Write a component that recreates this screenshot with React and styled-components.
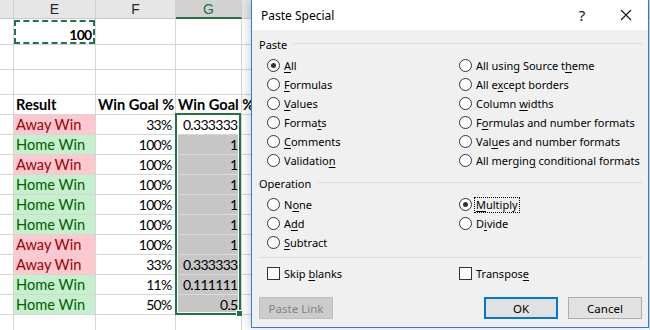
import React from "react";
import styled, { createGlobalStyle, css } from "styled-components";

const GlobalStyle = createGlobalStyle`
  html, body { margin: 0; padding: 0; background: #fff; }
  body { width: 650px; height: 330px; overflow: hidden; }
  * { box-sizing: border-box; }
`;

const GREEN = "#217346";
const GRID = "#d6d6d6";

const Stage = styled.div`
  position: relative;
  width: 650px;
  height: 330px;
  overflow: hidden;
  background: #fff;
`;

const Layers = styled.div`
  display: grid;
  > * {
    grid-area: 1 / 1;
  }
`;

const sheetTemplate = css`
  display: grid;
  grid-template-columns: 14px 82px 80px 66px 1fr;
  grid-template-rows: 19px 26px 25px 25px 20px repeat(11, 20px);
`;

const Sheet = styled.div`
  ${sheetTemplate}
  font-family: Lato, "Liberation Sans", sans-serif;
  font-size: 14.6px;
  color: #000;
`;

const Overlay = styled.div`
  ${sheetTemplate}
  pointer-events: none;
`;

const Cell = styled.div`
  border-right: 1px solid ${GRID};
  border-bottom: 1px solid ${GRID};
  display: flex;
  align-items: flex-end;
  justify-content: ${(p) => (p.$right ? "flex-end" : "flex-start")};
  padding: 0 3px 0 2px;
  white-space: nowrap;
  line-height: 18px;
  font-weight: ${(p) => (p.$bold ? 700 : 400)};
  ${(p) =>
    p.$num &&
    css`
      font-size: 14px;
      letter-spacing: -0.7px;
      padding-right: 3.5px;
    `}
  ${(p) =>
    p.$kind === "away" &&
    css`
      background: #ffc7ce;
      color: #9c0006;
    `}
  ${(p) =>
    p.$kind === "home" &&
    css`
      background: #c6efce;
      color: #006100;
    `}
  ${(p) =>
    p.$kind === "sel" &&
    css`
      background: #c6c6c6;
      border-bottom-color: #dadada;
    `}
`;

const HeadCell = styled.div`
  background: ${(p) => (p.$active ? "#d2d2d2" : "#e6e6e6")};
  color: ${(p) => (p.$active ? GREEN : "#262626")};
  border-right: 1px solid #cfcfcf;
  border-bottom: ${(p) => (p.$active ? `2px solid ${GREEN}` : "1px solid #c8c8c8")};
  display: flex;
  align-items: center;
  justify-content: center;
  font-family: "Liberation Sans", sans-serif;
  font-size: 14px;
  line-height: 1;
`;

const CopyCell = styled(Cell)`
  position: relative;
  font-weight: 700;
  &::after {
    content: "";
    position: absolute;
    left: 0;
    top: 1px;
    right: 0;
    bottom: 0;
    border: 2px dashed ${GREEN};
  }
`;

const Selection = styled.div`
  grid-column: 4;
  grid-row: 6 / 16;
  margin: -2px 1px 0 -1px;
  border: 2px solid ${GREEN};
  box-shadow: inset 0 0 0 1px #fff;
  position: relative;
`;

const FillHandle = styled.div`
  position: absolute;
  right: -4px;
  bottom: -4px;
  width: 7px;
  height: 7px;
  background: ${GREEN};
  border: 1px solid #fff;
`;

/* ---------- Dialog ---------- */

const Dialog = styled.div`
  position: absolute;
  left: 251px;
  top: -1px;
  width: 398px;
  height: 329px;
  border: 1px solid #2b7fd6;
  background: #f0f0f0;
  box-shadow: -2px 0 10px rgba(0, 0, 0, 0.18);
  display: flex;
  flex-direction: column;
  font-family: "Noto Sans", "Open Sans", sans-serif;
  font-size: 11px;
  color: #000;
  z-index: 5;
`;

const TitleBar = styled.div`
  height: 30px;
  background: #fff;
  display: flex;
  align-items: center;
  padding-left: 9px;
  font-size: 12px;
`;

const Title = styled.div`
  flex: 1;
`;

const TitleButton = styled.div`
  width: 44px;
  display: flex;
  align-items: center;
  justify-content: center;
  font-size: 15px;
  color: #111;
`;

const Body = styled.div`
  flex: 1;
  display: flex;
  flex-direction: column;
  padding: 0 6px 0 7px;
`;

const GroupHead = styled.div`
  display: flex;
  align-items: center;
  height: 16px;
  margin-top: ${(p) => p.$mt}px;
  gap: 6px;
  &::after {
    content: "";
    flex: 1;
    height: 1px;
    background: #dcdcdc;
    margin-top: -2px;
  }
`;

const OptGrid = styled.div`
  display: grid;
  grid-template-columns: 192px 1fr;
  grid-auto-rows: 19px;
  padding-left: 8px;
  margin-top: ${(p) => p.$mt}px;
`;

const Opt = styled.div`
  display: flex;
  align-items: center;
  gap: 4px;
  white-space: nowrap;
  grid-column: ${(p) => p.$col};
`;

const Radio = styled.span`
  width: 13px;
  height: 13px;
  border-radius: 50%;
  border: 1px solid #333;
  background: #fff;
  display: inline-flex;
  align-items: center;
  justify-content: center;
  flex: none;
  &::after {
    content: "";
    width: 5px;
    height: 5px;
    border-radius: 50%;
    background: ${(p) => (p.$on ? "#333" : "transparent")};
  }
`;

const Check = styled.span`
  width: 13px;
  height: 13px;
  border: 1px solid #333;
  background: #fff;
  flex: none;
`;

const Label = styled.span`
  padding: 0 1px;
  line-height: 14px;
  border: 1px dotted ${(p) => (p.$focus ? "#000" : "transparent")};
  margin-left: -2px;
`;

const Acc = styled.u`
  text-decoration: underline;
  text-underline-offset: 2px;
`;

const Separator = styled.div`
  height: 1px;
  background: #dcdcdc;
  margin: 5px 0 0 0;
`;

const ButtonRow = styled.div`
  display: flex;
  align-items: center;
  margin-top: 14px;
`;

const Button = styled.div`
  width: 74px;
  height: 22px;
  display: flex;
  align-items: center;
  justify-content: center;
  font-size: 11.5px;
  background: ${(p) => (p.$disabled ? "#cccccc" : "#e1e1e1")};
  color: ${(p) => (p.$disabled ? "#838383" : "#000")};
  border: ${(p) =>
    p.$primary ? "2px solid #0078d7" : p.$disabled ? "1px solid #bfbfbf" : "1px solid #adadad"};
  margin-left: ${(p) => p.$ml || 0}px;
`;

const Option = ({ col = 1, on, focus, parts, check }) => (
  <Opt $col={col}>
    {check ? <Check /> : <Radio $on={on} />}
    <Label $focus={focus}>
      {parts[0]}
      <Acc>{parts[1]}</Acc>
      {parts[2]}
    </Label>
  </Opt>
);

const pasteOpts = [
  [{ on: true, parts: ["", "A", "ll"] }, { parts: ["All using Source t", "h", "eme"] }],
  [{ parts: ["", "F", "ormulas"] }, { parts: ["All e", "x", "cept borders"] }],
  [{ parts: ["", "V", "alues"] }, { parts: ["Column ", "w", "idths"] }],
  [{ parts: ["Forma", "t", "s"] }, { parts: ["F", "o", "rmulas and number formats"] }],
  [{ parts: ["", "C", "omments"] }, { parts: ["Val", "u", "es and number formats"] }],
  [{ parts: ["Validatio", "n", ""] }, { parts: ["All mergin", "g", " conditional formats"] }],
];

const rows = [
  ["away", "33%", "0.333333"],
  ["home", "100%", "1"],
  ["away", "100%", "1"],
  ["home", "100%", "1"],
  ["home", "100%", "1"],
  ["home", "100%", "1"],
  ["away", "100%", "1"],
  ["away", "33%", "0.333333"],
  ["home", "11%", "0.111111"],
  ["home", "50%", "0.5"],
];

const EmptyRow = () => (
  <>
    <Cell />
    <Cell />
    <Cell />
    <Cell />
    <Cell />
  </>
);

export default function App() {
  return (
    <Stage>
      <GlobalStyle />
      <Layers>
        <Sheet>
          <HeadCell />
          <HeadCell>E</HeadCell>
          <HeadCell>F</HeadCell>
          <HeadCell $active>G</HeadCell>
          <HeadCell />

          <Cell />
          <CopyCell $right $num>100</CopyCell>
          <Cell />
          <Cell />
          <Cell />

          <EmptyRow />
          <EmptyRow />

          <Cell />
          <Cell $bold>Result</Cell>
          <Cell $bold>Win Goal %</Cell>
          <Cell $bold>Win Goal %</Cell>
          <Cell />

          {rows.map(([kind, pct, val], i) => (
            <React.Fragment key={i}>
              <Cell />
              <Cell $kind={kind}>{kind === "away" ? "Away Win" : "Home Win"}</Cell>
              <Cell $right $num>{pct}</Cell>
              <Cell $right $num $kind={i === 0 ? undefined : "sel"}>
                {val}
              </Cell>
              <Cell />
            </React.Fragment>
          ))}

          <EmptyRow />
        </Sheet>
        <Overlay>
          <Selection>
            <FillHandle />
          </Selection>
        </Overlay>
      </Layers>

      <Dialog>
        <TitleBar>
          <Title>Paste Special</Title>
          <TitleButton>?</TitleButton>
          <TitleButton>
            <svg width="12" height="12" viewBox="0 0 12 12">
              <path d="M1 1 L11 11 M11 1 L1 11" stroke="#111" strokeWidth="1.1" />
            </svg>
          </TitleButton>
        </TitleBar>
        <Body>
          <GroupHead $mt={6}>Paste</GroupHead>
          <OptGrid $mt={4}>
            {pasteOpts.map(([a, b], i) => (
              <React.Fragment key={i}>
                <Option col={1} {...a} />
                <Option col={2} {...b} />
              </React.Fragment>
            ))}
          </OptGrid>
          <GroupHead $mt={5}>Operation</GroupHead>
          <OptGrid $mt={4}>
            <Option col={1} parts={["N", "o", "ne"]} />
            <Option col={2} on focus parts={["", "M", "ultiply"]} />
            <Option col={1} parts={["A", "d", "d"]} />
            <Option col={2} parts={["D", "i", "vide"]} />
            <Option col={1} parts={["", "S", "ubtract"]} />
          </OptGrid>
          <Separator />
          <OptGrid $mt={6}>
            <Option col={1} check parts={["Skip ", "b", "lanks"]} />
            <Option col={2} check parts={["Transpos", "e", ""]} />
          </OptGrid>
          <ButtonRow>
            <Button $disabled>Paste Link</Button>
            <Button $primary $ml={151}>OK</Button>
            <Button $ml={10}>Cancel</Button>
          </ButtonRow>
        </Body>
      </Dialog>
    </Stage>
  );
}
